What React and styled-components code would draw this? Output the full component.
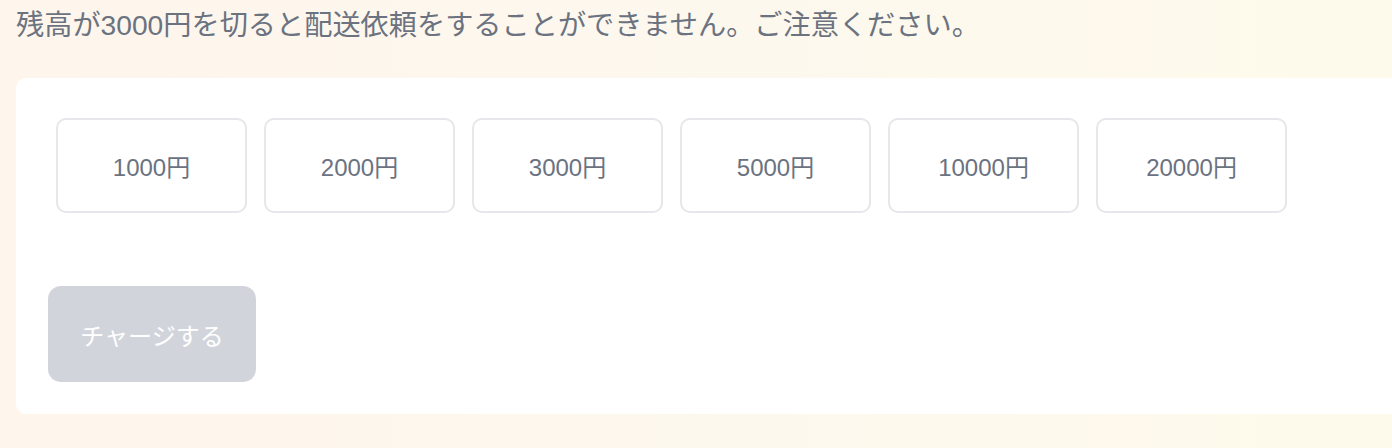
import React from "react";
import styled, { createGlobalStyle } from "styled-components";

const Global = createGlobalStyle`
  html, body {
    margin: 0;
    padding: 0;
    overflow: hidden;
  }
  body {
    width: 1392px;
    height: 448px;
    background: linear-gradient(to right, #fef5ec 0%, #fdf8ee 50%, #fefaeb 100%);
    font-family: "Liberation Sans", "Noto Sans CJK JP", sans-serif;
  }
`;

const Page = styled.div`
  padding: 0 0 0 16px;
  display: flex;
  flex-direction: column;
`;

const Notice = styled.p`
  margin: 0;
  padding-top: 4px;
  height: 78px;
  box-sizing: border-box;
  font-size: 28.2px;
  line-height: 42px;
  color: #6b7280;
  white-space: nowrap;
`;

const Card = styled.section`
  width: 1420px;
  box-sizing: border-box;
  background: #ffffff;
  border-radius: 10px;
  padding: 32px;
  display: flex;
  flex-direction: column;
  gap: 73px;
`;

const AmountRow = styled.div`
  display: flex;
  gap: 17px;
  padding: 8px 8px 0;
`;

const AmountButton = styled.button`
  width: 191px;
  height: 95px;
  box-sizing: border-box;
  background: #ffffff;
  border: 2px solid #e5e7eb;
  border-radius: 10px;
  font-family: inherit;
  font-size: 24px;
  color: #6b7280;
  display: flex;
  align-items: center;
  justify-content: center;
  cursor: pointer;
`;

const ChargeButton = styled.button`
  width: 208px;
  height: 96px;
  box-sizing: border-box;
  border: none;
  border-radius: 13px;
  background: #d1d5db;
  color: #ffffff;
  font-family: inherit;
  font-size: 24px;
  display: flex;
  align-items: center;
  justify-content: center;
`;

const amounts = [1000, 2000, 3000, 5000, 10000, 20000];

export default function App() {
  return (
    <>
      <Global />
      <Page>
        <Notice>残高が3000円を切ると配送依頼をすることができません。ご注意ください。</Notice>
        <Card>
          <AmountRow>
            {amounts.map((a) => (
              <AmountButton key={a}>{a}円</AmountButton>
            ))}
          </AmountRow>
          <ChargeButton disabled>チャージする</ChargeButton>
        </Card>
      </Page>
    </>
  );
}
